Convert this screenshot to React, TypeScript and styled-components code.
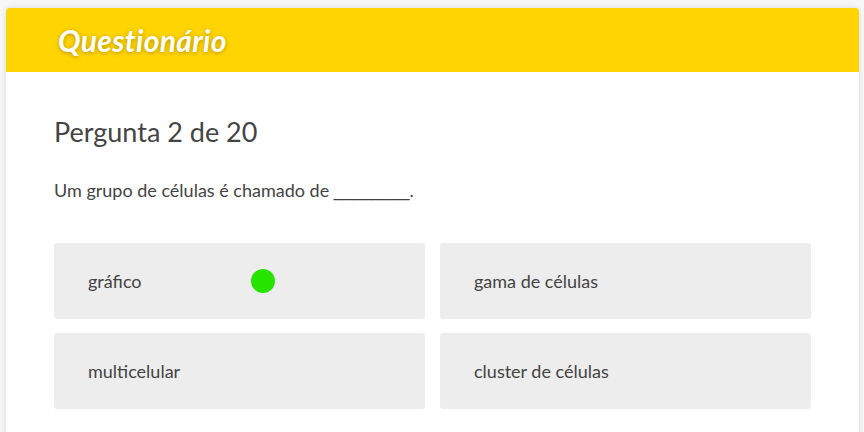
import React from "react";
import styled, { createGlobalStyle } from "styled-components";

const Global = createGlobalStyle`
  html, body { margin: 0; padding: 0; background: #f7f7f7; }
  body { font-family: "Lato", "Open Sans", sans-serif; }
  * { box-sizing: border-box; }
`;

const Page = styled.div`
  padding: 8px 5px 0 6px;
  height: 432px;
  overflow: hidden;
`;

const Card = styled.section`
  background: #fff;
  border-radius: 4px 4px 0 0;
  box-shadow: 0 0 6px rgba(0, 0, 0, 0.12);
  min-height: 500px;
`;

const Header = styled.header`
  height: 64px;
  background: #ffd400;
  border-radius: 4px 4px 0 0;
  display: flex;
  align-items: center;
  padding-left: 52px;
`;

const Title = styled.h1`
  margin: 0;
  color: #fff;
  font-size: 30px;
  font-weight: 700;
  font-style: italic;
  letter-spacing: 0.3px;
  text-shadow: 0 1px 4px rgba(0, 0, 0, 0.3);
`;

const Body = styled.div`
  padding: 40px 48px 0 48px;
`;

const QNum = styled.h2`
  margin: 0;
  font-size: 27px;
  font-weight: 400;
  color: #444;
  line-height: 40px;
`;

const QText = styled.p`
  margin: 26px 0 0 0;
  font-size: 18px;
  color: #444;
  line-height: 24px;
  height: 24px;
`;

const Blank = styled.span`
  font-family: "Liberation Sans", sans-serif;
  font-size: 17px;
  line-height: 1;
`;

const Options = styled.div`
  margin-top: 41px;
  display: grid;
  grid-template-columns: 1fr 1fr;
  column-gap: 15px;
  row-gap: 14px;
`;

const Option = styled.div`
  position: relative;
  height: 76px;
  background: #ededed;
  border-radius: 3px;
  display: flex;
  align-items: center;
  padding-left: 34px;
  font-size: 18px;
  color: #444;
`;

const Dot = styled.span`
  position: absolute;
  left: 197px;
  top: 26px;
  width: 24px;
  height: 24px;
  border-radius: 50%;
  background: #26e300;
`;

const options = ["gráfico", "gama de células", "multicelular", "cluster de células"];

export default function App() {
  return (
    <Page>
      <Global />
      <Card>
        <Header>
          <Title>Questionário</Title>
        </Header>
        <Body>
          <QNum>Pergunta 2 de 20</QNum>
          <QText>
            Um grupo de células é chamado de <Blank>________</Blank>.
          </QText>
          <Options>
            {options.map((o, i) => (
              <Option key={o}>
                {o}
                {i === 0 && <Dot />}
              </Option>
            ))}
          </Options>
        </Body>
      </Card>
    </Page>
  );
}
